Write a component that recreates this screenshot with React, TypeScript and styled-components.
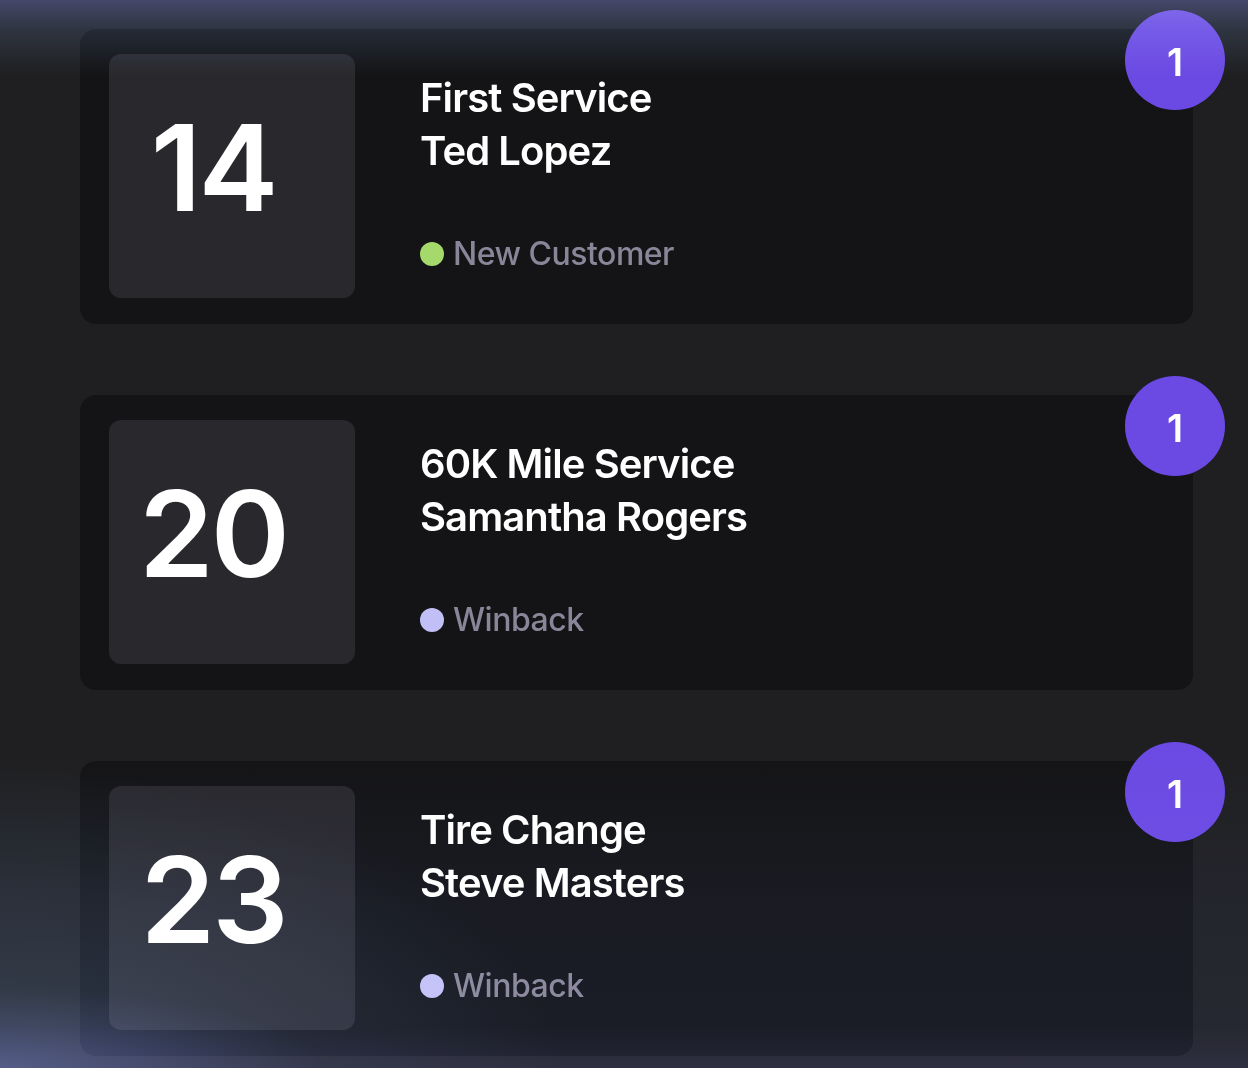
import styled, { createGlobalStyle } from "styled-components";

const GlobalStyle = createGlobalStyle`
  html, body {
    margin: 0;
    padding: 0;
    background: #1f1f21;
  }
  body {
    font-family: Inter, "Noto Sans", "Liberation Sans", sans-serif;
    -webkit-font-smoothing: antialiased;
  }
`;

type Tag = "new" | "winback";

const appointments: {
  day: number;
  service: string;
  customer: string;
  tag: Tag;
  label: string;
  count: number;
}[] = [
  { day: 14, service: "First Service", customer: "Ted Lopez", tag: "new", label: "New Customer", count: 1 },
  { day: 20, service: "60K Mile Service", customer: "Samantha Rogers", tag: "winback", label: "Winback", count: 1 },
  { day: 23, service: "Tire Change", customer: "Steve Masters", tag: "winback", label: "Winback", count: 1 },
];

const Page = styled.div`
  position: relative;
  width: 1248px;
  height: 1068px;
  overflow: hidden;
  background: #1f1f21;
  box-sizing: border-box;
  padding: 29px 0 0 80px;
  isolation: isolate;
`;

// soft light spill over the top and bottom edges
const Glow = styled.div`
  position: absolute;
  inset: 0;
  pointer-events: none;
  z-index: 5;
  mix-blend-mode: screen;
  background:
    linear-gradient(180deg, rgb(43, 46, 84) 0px, rgb(18, 25, 36) 29px, rgb(0, 0, 0) 75px),
    radial-gradient(ellipse 320px 80px at 0px 1068px, rgb(30, 30, 68), rgb(0, 0, 0) 100%),
    radial-gradient(ellipse 560px 300px at 0px 1068px, rgb(20, 30, 38), rgb(8, 12, 16) 60%, rgb(0, 0, 0) 100%),
    linear-gradient(0deg, rgb(18, 18, 36) 0px, rgb(8, 10, 18) 40px, rgb(6, 8, 14) 160px, rgb(0, 0, 0) 320px);
  background-blend-mode: screen, screen, screen, normal;
`;

const List = styled.div`
  display: flex;
  flex-direction: column;
  gap: 71px;
  width: 1113px;
`;

const Card = styled.div`
  position: relative;
  display: flex;
  height: 295px;
  box-sizing: border-box;
  padding: 25px 29px 26px;
  background: #141416;
  border-radius: 16px;
`;

const DayBox = styled.div`
  flex: 0 0 246px;
  height: 244px;
  border-radius: 12px;
  background: #29282d;
  display: flex;
  align-items: center;
  justify-content: center;
  padding: 0 38px 16px 0;
  box-sizing: border-box;
  color: #ffffff;
  font-size: 120px;
  font-weight: 600;
  letter-spacing: -3px;
  line-height: 1;
`;

const Info = styled.div`
  display: flex;
  flex-direction: column;
  margin-left: 65px;
  padding-top: 17px;
  padding-bottom: 24px;
`;

const Title = styled.div`
  color: #ffffff;
  font-size: 40px;
  font-weight: 600;
  line-height: 53px;
  letter-spacing: -0.9px;
`;

const Status = styled.div`
  margin-top: auto;
  display: flex;
  align-items: center;
  gap: 9px;
  color: #8a8699;
  font-size: 32px;
  font-weight: 500;
  letter-spacing: -0.5px;
  line-height: 40px;
`;

const Dot = styled.span<{ $tag: Tag }>`
  width: 24px;
  height: 24px;
  border-radius: 50%;
  background: ${(p) => (p.$tag === "new" ? "#a6d96c" : "#c2bff7")};
`;

const Badge = styled.div`
  position: absolute;
  top: -19px;
  right: -32px;
  width: 100px;
  height: 100px;
  border-radius: 50%;
  background: #6b4ae3;
  color: #ffffff;
  display: flex;
  align-items: center;
  justify-content: center;
  font-size: 38px;
  font-weight: 600;
  padding-top: 4px;
  box-sizing: border-box;
`;

export default function App() {
  return (
    <>
      <GlobalStyle />
      <Page>
        <List>
          {appointments.map((a, i) => (
            <Card key={i}>
              <DayBox>{a.day}</DayBox>
              <Info>
                <Title>
                  {a.service}
                  <br />
                  {a.customer}
                </Title>
                <Status>
                  <Dot $tag={a.tag} />
                  {a.label}
                </Status>
              </Info>
              <Badge>{a.count}</Badge>
            </Card>
          ))}
        </List>
        <Glow />
      </Page>
    </>
  );
}
